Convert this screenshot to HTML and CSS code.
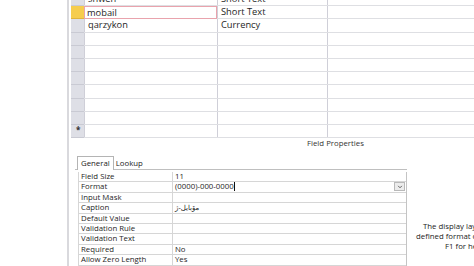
FILE: index.html
```html
<!DOCTYPE html>
<html>
  <head>
    <meta charset="UTF-8" />
    <link rel="stylesheet" href="styles.css">
  </head>
  <body>
    <div class="window">
      <div class="gutter"></div>
      <div class="pane">
        <div class="design-grid">
          <div class="row first">
            <div class="selector"></div>
            <div class="cell name">shwen</div>
            <div class="cell type">Short Text</div>
            <div class="cell desc"></div>
          </div>
          <div class="row">
            <div class="selector current"></div>
            <div class="cell name active">mobail</div>
            <div class="cell type">Short Text</div>
            <div class="cell desc"></div>
          </div>
          <div class="row">
            <div class="selector"></div>
            <div class="cell name">qarzykon</div>
            <div class="cell type">Currency</div>
            <div class="cell desc"></div>
          </div>
          <div class="row"><div class="selector"></div><div class="cell name"></div><div class="cell type"></div><div class="cell desc"></div></div>
          <div class="row"><div class="selector"></div><div class="cell name"></div><div class="cell type"></div><div class="cell desc"></div></div>
          <div class="row"><div class="selector"></div><div class="cell name"></div><div class="cell type"></div><div class="cell desc"></div></div>
          <div class="row"><div class="selector"></div><div class="cell name"></div><div class="cell type"></div><div class="cell desc"></div></div>
          <div class="row"><div class="selector"></div><div class="cell name"></div><div class="cell type"></div><div class="cell desc"></div></div>
          <div class="row"><div class="selector"></div><div class="cell name"></div><div class="cell type"></div><div class="cell desc"></div></div>
          <div class="row"><div class="selector"></div><div class="cell name"></div><div class="cell type"></div><div class="cell desc"></div></div>
          <div class="row new">
            <div class="selector"><span class="new-mark">*</span></div>
            <div class="cell name"></div>
            <div class="cell type"></div>
            <div class="cell desc"></div>
          </div>
        </div>

        <div class="props-title">Field Properties</div>

        <div class="props">
          <div class="props-left">
            <div class="tabs">
              <div class="tab selected">General</div>
              <div class="tab">Lookup</div>
            </div>
            <div class="prop-grid">
              <div class="prop"><div class="label">Field Size</div><div class="value">11</div></div>
              <div class="prop">
                <div class="label">Format</div>
                <div class="value">(0000)-000-0000<span class="caret"></span>
                  <span class="drop">
                    <svg viewBox="0 0 10 8" width="10" height="8"><path d="M2.5 2.5 L5 5 L7.5 2.5" fill="none" stroke="#555" stroke-width="1.2"/></svg>
                  </span>
                </div>
              </div>
              <div class="prop"><div class="label">Input Mask</div><div class="value"></div></div>
              <div class="prop"><div class="label">Caption</div><div class="value caption">مۆبایل-ژ</div></div>
              <div class="prop"><div class="label">Default Value</div><div class="value"></div></div>
              <div class="prop"><div class="label">Validation Rule</div><div class="value"></div></div>
              <div class="prop"><div class="label">Validation Text</div><div class="value"></div></div>
              <div class="prop"><div class="label">Required</div><div class="value">No</div></div>
              <div class="prop"><div class="label">Allow Zero Length</div><div class="value">Yes</div></div>
            </div>
          </div>
          <div class="help">
            <div class="help-line l1">The display layout for the field. Select a pre-</div>
            <div class="help-line l2">defined format or enter a custom format. Press</div>
            <div class="help-line l3">F1 for help on formats.</div>
          </div>
        </div>
      </div>
    </div>
  </body>
</html>
```

FILE: styles.css
```css
:root {
  --grid-line: #dedfe3;
  --col-line: #cfcfd8;
  --selector: #dedfe6;
  --selector-line: #c9cad3;
  --current: #f6cd4e;
  --text: #1e1e1e;
  --prop-line: #d6d6d6;
}

* {
  margin: 0;
  padding: 0;
  box-sizing: border-box;
}

body {
  width: 474px;
  height: 266px;
  overflow: hidden;
  background: #ffffff;
  color: var(--text);
  font-family: 'Open Sans', 'Noto Sans', Arial, sans-serif;
}

.window {
  display: flex;
  height: 266px;
}

.gutter {
  width: 67px;
  flex-shrink: 0;
}

.pane {
  flex: 1;
  min-width: 0;
  border-left: 2px solid #d9d9dd;
  padding-left: 2px;
}

/* Table design grid */
.design-grid {
  margin-top: -7px;
}

.row {
  display: flex;
  height: 13.2px;
  border-bottom: 1px solid var(--grid-line);
}

.selector {
  width: 13px;
  flex-shrink: 0;
  background: var(--selector);
  border-bottom: 1px solid var(--selector-line);
  margin-bottom: -1px;
  position: relative;
}

.selector.current {
  background: var(--current);
  border-bottom-color: #e0b43c;
}

.new-mark {
  position: absolute;
  left: 5px;
  top: 1px;
  font-size: 8px;
  line-height: 8px;
  font-weight: 700;
  color: #333;
}

.cell {
  font-size: 9.3px;
  line-height: 12px;
  padding-left: 3px;
  white-space: nowrap;
}

.name {
  width: 133px;
  flex-shrink: 0;
  border-left: 1px solid var(--col-line);
}

.type {
  width: 110px;
  flex-shrink: 0;
  border-left: 1px solid var(--col-line);
}

.desc {
  flex: 1;
  border-left: 1px solid var(--col-line);
}

.name.active {
  border: 1px solid #e9a3ad;
  margin-bottom: -1px;
  line-height: 11px;
  padding-left: 2px;
}

/* Field properties */
.props-title {
  font-size: 7.8px;
  line-height: 10px;
  color: #333;
  padding-left: 236px;
}

.props {
  display: flex;
  margin-top: 8px;
}

.props-left {
  width: 336px;
  flex-shrink: 0;
  padding-left: 6px;
}

.tabs {
  display: flex;
  align-items: flex-end;
  height: 14px;
  border-bottom: 1px solid #bfbfbf;
  margin-left: -2px;
  padding-left: 2px;
}

.tab {
  font-size: 7.8px;
  line-height: 11px;
  padding: 0 2px;
  color: #222;
}

.tab.selected {
  height: 14px;
  line-height: 13px;
  border: 1px solid #b4b4b4;
  border-bottom: none;
  background: #ffffff;
  margin-bottom: -1px;
  padding: 0 3px;
}

.prop-grid {
  margin-top: 2px;
  margin-left: 1px;
  border-right: 1px solid #c4c4c4;
}

.prop {
  display: flex;
  height: 10.4px;
  border-bottom: 1px solid var(--prop-line);
}

.label {
  width: 94px;
  flex-shrink: 0;
  font-size: 7.8px;
  line-height: 9.4px;
  padding-left: 2px;
  border-left: 1px solid var(--prop-line);
}

.value {
  flex: 1;
  position: relative;
  font-size: 7.8px;
  line-height: 9.4px;
  padding-left: 2px;
  border-left: 1px solid var(--prop-line);
}

.caption {
  font-family: 'Noto Sans', 'DejaVu Sans', sans-serif;
  font-size: 7px;
}

.caret {
  display: inline-block;
  width: 1px;
  height: 9px;
  background: #111;
  vertical-align: top;
}

.drop {
  position: absolute;
  right: 1px;
  top: 0;
  width: 11px;
  height: 9px;
  background: #ececec;
  border: 1px solid #b9b9b9;
  display: flex;
  align-items: center;
  justify-content: center;
}

.drop svg {
  width: 8px;
  height: 6px;
}

/* Help text, cut off by the window edge */
.help {
  flex: 1;
  min-width: 0;
  overflow: hidden;
  padding-top: 66px;
  font-size: 7.8px;
  line-height: 9.8px;
  color: #222;
  white-space: nowrap;
}

.help-line.l1 {
  padding-left: 16px;
}

.help-line.l2 {
  padding-left: 9px;
}

.help-line.l3 {
  padding-left: 38px;
}
```
